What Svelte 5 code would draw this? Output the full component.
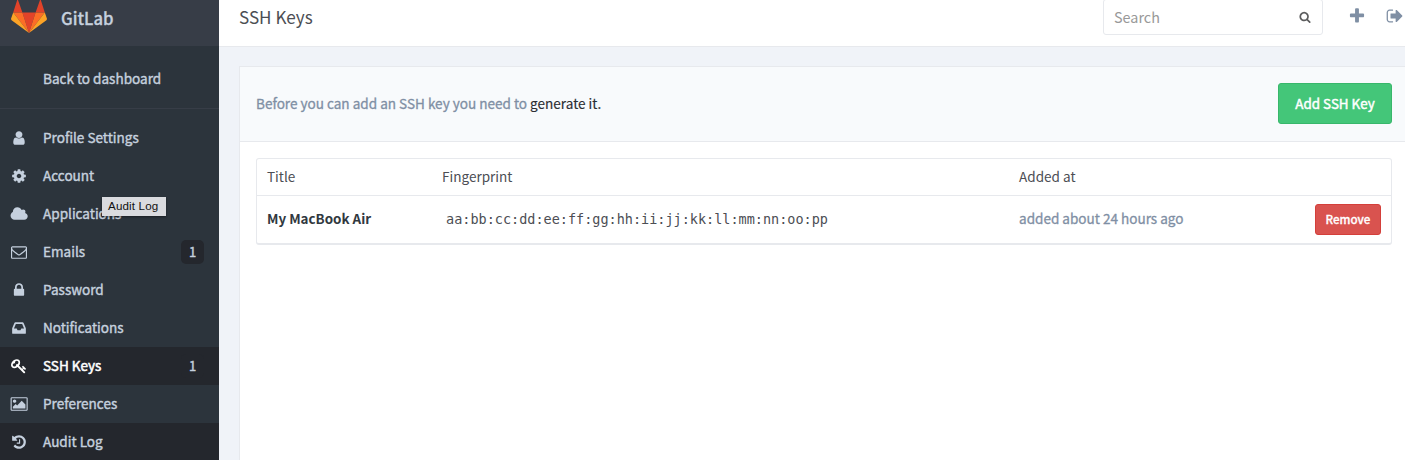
<script>
  const paths = {
    user: 'M1536 1399q0 109-62.5 187t-150.5 78h-854q-88 0-150.5-78t-62.5-187q0-85 8.5-160.5t31.5-152 58.5-131 94-89 134.5-34.5q131 128 313 128t313-128q76 0 134.5 34.5t94 89 58.5 131 31.5 152 8.5 160.5zm-256-887q0 159-112.5 271.5t-271.5 112.5-271.5-112.5-112.5-271.5 112.5-271.5 271.5-112.5 271.5 112.5 112.5 271.5z',
    cog: 'M1152 896q0-106-75-181t-181-75-181 75-75 181 75 181 181 75 181-75 75-181zm512-109v222q0 12-8 23t-20 13l-185 28q-19 54-39 91 35 50 107 138 10 12 10 25t-9 23q-27 37-99 108t-94 71q-12 0-26-9l-138-108q-44 23-91 38-16 136-29 186-7 28-36 28h-222q-14 0-24.5-8.5t-11.5-21.5l-28-184q-49-16-90-37l-141 107q-10 9-25 9-14 0-25-11-126-114-165-168-7-10-7-23 0-12 8-23 15-21 51-66.5t54-70.5q-27-50-41-99l-183-27q-13-2-21-12.5t-8-23.5v-222q0-12 8-23t19-13l186-28q14-46 39-92-40-57-107-138-10-12-10-24 0-10 9-23 26-36 98.5-107.5t94.5-71.5q13 0 26 10l138 107q44-23 91-38 16-136 29-186 7-28 36-28h222q14 0 24.5 8.5t11.5 21.5l28 184q49 16 90 37l142-107q9-9 24-9 13 0 25 10 129 119 165 170 7 8 7 22 0 12-8 23-15 21-51 66.5t-54 70.5q26 50 41 98l183 28q13 2 21 12.5t8 23.5z',
    cloud: 'M1984 1152q0 159-112.5 271.5t-271.5 112.5h-1088q-185 0-316.5-131.5t-131.5-316.5q0-132 71-241.5t187-163.5q-2-28-2-43 0-212 150-362t362-150q158 0 286.5 88t187.5 230q70-62 166-62 106 0 181 75t75 181q0 75-41 138 129 30 213 134.5t84 239.5z',
    envelope: 'M1664 1504v-768q-32 36-69 66-268 206-426 338-51 43-83 67t-86.5 48.5-102.5 24.5h-2q-48 0-102.5-24.5t-86.5-48.5-83-67q-158-132-426-338-37-30-69-66v768q0 13 9.5 22.5t22.5 9.5h1472q13 0 22.5-9.5t9.5-22.5zm0-1051v-24.5l-.5-13-3-12.5-5.5-9-9-7.5-14-2.5h-1472q-13 0-22.5 9.5t-9.5 22.5q0 168 147 284 193 152 401 317 6 5 35 29.5t46 37.5 44.5 31.5 50.5 27.5 43 9h2q20 0 43-9t50.5-27.5 44.5-31.5 46-37.5 35-29.5q208-165 401-317 54-43 100.5-115.5t46.5-131.5zm128-37v1088q0 66-47 113t-113 47h-1472q-66 0-113-47t-47-113v-1088q0-66 47-113t113-47h1472q66 0 113 47t47 113z',
    lock: 'M640 768h512v-192q0-106-75-181t-181-75-181 75-75 181v192zm832 96v576q0 40-28 68t-68 28h-960q-40 0-68-28t-28-68v-576q0-40 28-68t68-28h32v-192q0-184 132-316t316-132 316 132 132 316v192h32q40 0 68 28t28 68z',
    inbox: 'M1151 960h316q-1-3-2.5-8.5t-2.5-7.5l-212-496h-708l-212 496q-1 3-2.5 8.5t-2.5 7.5h316l95 192h320zm513 30v482q0 26-19 45t-45 19h-1408q-26 0-45-19t-19-45v-482q0-62 25-123l238-552q10-25 36.5-42t52.5-17h832q26 0 52.5 17t36.5 42l238 552q25 61 25 123z',
    key: 'M832 512q0-80-56-136t-136-56-136 56-56 136q0 42 19 83-41-19-83-19-80 0-136 56t-56 136 56 136 136 56 136-56 56-136q0-42-19-83 41 19 83 19 80 0 136-56t56-136zm851 704q0 17-49 66t-66 49q-9 0-28.5-16t-36.5-33-38.5-40-24.5-26l-96 96 220 220q28 28 28 68 0 42-39 81t-81 39q-40 0-68-28l-671-671q-176 131-365 131-163 0-265.5-102.5t-102.5-265.5q0-160 95-313t248-248 313-95q163 0 265.5 102.5t102.5 265.5q0 189-131 365l355 355 96-96q-3-3-26-24.5t-40-38.5-33-36.5-16-28.5q0-17 49-66t66-49q13 0 23 10 6 6 46 44.5t82 79.5 86.5 86 73 78 28.5 41z',
    picture: 'M704 576q0 80-56 136t-136 56-136-56-56-136 56-136 136-56 136 56 56 136zm1024 384v448h-1408v-192l320-320 160 160 512-512zm96-704h-1600q-13 0-22.5 9.5t-9.5 22.5v1216q0 13 9.5 22.5t22.5 9.5h1600q13 0 22.5-9.5t9.5-22.5v-1216q0-13-9.5-22.5t-22.5-9.5zm160 32v1216q0 66-47 113t-113 47h-1600q-66 0-113-47t-47-113v-1216q0-66 47-113t113-47h1600q66 0 113 47t47 113z',
    history: 'M1664 896q0 156-61 298t-164 245-245 164-298 61q-172 0-327-72.5t-264-204.5q-7-10-6.5-22.5t8.5-20.5l137-138q10-9 25-9 16 2 23 12 73 95 179 147t225 52q104 0 198.5-40.5t163.5-109.5 109.5-163.5 40.5-198.5-40.5-198.5-109.5-163.5-163.5-109.5-198.5-40.5q-98 0-188 35.5t-160 101.5l137 138q31 30 14 69-17 40-59 40h-448q-26 0-45-19t-19-45v-448q0-42 40-59 39-17 69 14l130 129q107-101 244.5-156.5t284.5-55.5q156 0 298 61t245 164 164 245 61 298zm-640-288v448q0 14-9 23t-23 9h-320q-14 0-23-9t-9-23v-64q0-14 9-23t23-9h224v-352q0-14 9-23t23-9h64q14 0 23 9t9 23z',
    search: 'M1216 832q0-185-131.5-316.5t-316.5-131.5-316.5 131.5-131.5 316.5 131.5 316.5 316.5 131.5 316.5-131.5 131.5-316.5zm512 832q0 52-38 90t-90 38q-54 0-90-38l-343-342q-179 124-399 124-143 0-273.5-55.5t-225-150-150-225-55.5-273.5 55.5-273.5 150-225 225-150 273.5-55.5 273.5 55.5 225 150 150 225 55.5 273.5q0 220-124 399l343 343q37 37 37 90z',
    plus: 'M1600 736v192q0 40-28 68t-68 28h-416v416q0 40-28 68t-68 28h-192q-40 0-68-28t-28-68v-416h-416q-40 0-68-28t-28-68v-192q0-40 28-68t68-28h416v-416q0-40 28-68t68-28h192q40 0 68 28t28 68v416h416q40 0 68 28t28 68z',
    signout: 'M704 1440q0 4 1 20t.5 26.5-3 23.5-10 19.5-20.5 6.5h-320q-119 0-203.5-84.5t-84.5-203.5v-704q0-119 84.5-203.5t203.5-84.5h320q13 0 22.5 9.5t9.5 22.5q0 4 1 20t.5 26.5-3 23.5-10 19.5-20.5 6.5h-320q-66 0-113 47t-47 113v704q0 66 47 113t113 47h312l11.5 1 11.5 3 8 5.5 7 9 2 13.5zm928-544q0 26-19 45l-544 544q-19 19-45 19t-45-19-19-45v-288h-448q-26 0-45-19t-19-45v-384q0-26 19-45t45-19h448v-288q0-26 19-45t45-19 45 19l544 544q19 19 19 45z'
  };

  const items = [
    { icon: 'user', label: 'Profile Settings' },
    { icon: 'cog', label: 'Account' },
    { icon: 'cloud', label: 'Applications', wide: true },
    { icon: 'envelope', label: 'Emails', count: 1 },
    { icon: 'lock', label: 'Password' },
    { icon: 'inbox', label: 'Notifications' },
    { icon: 'key', label: 'SSH Keys', count: 1, active: true },
    { icon: 'picture', label: 'Preferences', wide: true },
    { icon: 'history', label: 'Audit Log', hover: true }
  ];
</script>

{#snippet icon(name, size, wide = false)}
  <svg class="icon" height={size} width={wide ? (size * 2048) / 1792 : size} viewBox={wide ? '0 0 2048 1792' : '0 0 1792 1792'}>
    <path d={paths[name]} />
  </svg>
{/snippet}

<div class="page">
  <aside>
    <div class="brand">
      <svg class="logo" width="36" height="34" viewBox="0 0 36 34">
        <path fill="#e24329" d="M18 33 11.4 12.5h13.2zM2.2 12.5h9.2L7 0q-.4-1-.8 0zM33.8 12.5h-9.2L29 0q.4-1 .8 0z" />
        <path fill="#fc6d26" d="M18 33 11.4 12.5H2.2zM18 33l6.6-20.5h9.2z" />
        <path fill="#fca326" d="M18 33 2.2 12.5.1 18.6q-.3 1 .5 1.6zM18 33l15.8-20.5 2.1 6.1q.3 1-.5 1.6z" />
      </svg>
      <span class="name">GitLab</span>
    </div>
    <a class="back" href="#dashboard">Back to dashboard</a>
    <nav>
      {#each items as item}
        <a class="item" class:active={item.active} class:hover={item.hover} href="#settings">
          <span class="glyph">{@render icon(item.icon, 16, item.wide)}</span>
          <span class="label">{item.label}</span>
          {#if item.count}<span class="count">{item.count}</span>{/if}
        </a>
      {/each}
    </nav>
    <div class="tooltip">Audit Log</div>
  </aside>

  <main>
    <header>
      <h1>SSH Keys</h1>
      <div class="search"><span>Search</span>{@render icon('search', 12)}</div>
      <div class="action plus">{@render icon('plus', 18)}</div>
      <div class="action">{@render icon('signout', 18)}</div>
    </header>
    <section>
      <div class="intro">
        <p>Before you can add an SSH key you need to <a href="#help">generate it.</a></p>
        <button class="add">Add SSH Key</button>
      </div>
      <div class="table">
        <div class="row head">
          <span>Title</span><span>Fingerprint</span><span>Added at</span><span></span>
        </div>
        <div class="row">
          <strong>My MacBook Air</strong>
          <code>aa:bb:cc:dd:ee:ff:gg:hh:ii:jj:kk:ll:mm:nn:oo:pp</code>
          <span class="when">added about 24 hours ago</span>
          <button class="remove">Remove</button>
        </div>
      </div>
    </section>
  </main>
</div>

<style>
  :global(body) { margin: 0; overflow: hidden; }
  .page {
    display: flex;
    width: 1405px;
    height: 460px;
    overflow: hidden;
    background: #f0f3f8;
    font-family: "Noto Sans CJK SC", sans-serif;
    font-size: 13.55px;
    line-height: 20px;
    color: #4c4e54;
  }
  .page :is(a) { text-decoration: none; }
  .icon { display: block; fill: currentColor; flex: none; }
  aside {
    position: relative;
    width: 219px;
    flex: none;
    background: #2c343c;
    color: #c5d0de;
    overflow: hidden;
  }
  .brand {
    display: flex;
    height: 46px;
    box-sizing: border-box;
    padding-left: 11px;
    background: #373d47;
  }
  .logo { flex: none; }
  .name {
    margin-left: 14px;
    font-size: 16.7px;
    font-weight: 500;
    line-height: 36px;
    -webkit-text-stroke: 0.3px currentColor;
  }
  .back {
    display: block;
    height: 62px;
    padding-left: 43px;
    border-bottom: 1px solid #373d47;
    line-height: 65px;
    color: inherit;
    -webkit-text-stroke: 0.4px currentColor;
  }
  nav { padding-top: 10px; }
  .item {
    display: flex;
    align-items: center;
    height: 38px;
    padding-right: 15px;
    color: inherit;
  }
  .glyph { width: 38px; display: flex; justify-content: center; }
  .label { flex: 1; padding: 0 0 2px 5px; -webkit-text-stroke: 0.4px currentColor; }
  .count {
    width: 23px;
    height: 24px;
    border-radius: 5px;
    background: #24272d;
    line-height: 23px;
    text-align: center;
    font-size: 13px;
    -webkit-text-stroke: 0.4px currentColor;
  }
  .active, .hover { background: #24272d; }
  .active .glyph, .active .label { color: #fff; }
  .active .label { -webkit-text-stroke: 0.5px currentColor; }
  .tooltip {
    position: absolute;
    left: 102px;
    top: 197px;
    width: 64px;
    height: 19px;
    box-sizing: border-box;
    padding-left: 6px;
    background: #dadbdf;
    color: #111;
    font: 11.6px/18px "Liberation Sans", sans-serif;
    letter-spacing: 0.15px;
    white-space: nowrap;
    box-shadow: 0 1px 2px rgba(0, 0, 0, 0.4);
  }
  main { flex: 1; min-width: 0; display: flex; flex-direction: column; }
  header {
    display: flex;
    align-items: flex-start;
    height: 46px;
    flex: none;
    border-bottom: 1px solid #e7e9ed;
    background: #fff;
    padding: 0 1px 0 20px;
  }
  h1 { flex: 1; margin: 0; font-size: 17.1px; font-weight: 400; line-height: 34px; color: #4c4e54; }
  .search {
    display: flex;
    align-items: center;
    justify-content: space-between;
    box-sizing: border-box;
    width: 220px;
    height: 36px;
    margin-top: -1px;
    padding: 0 11px 0 10px;
    border: 1px solid #e7e9ed;
    border-radius: 3px;
    color: #999;
    font-size: 14.4px;
  }
  .search .icon { color: #5c5d5e; }
  .action { padding-top: 7px; color: #7f8fa4; margin-left: 20px; }
  .plus { margin-left: 25px; }
  section {
    flex: 1;
    margin: 19px 0 0 20px;
    border: solid #e7e9ed;
    border-width: 1px 0 0 1px;
    background: #fff;
  }
  .intro {
    display: flex;
    align-items: center;
    justify-content: space-between;
    height: 72px;
    padding: 0 13px 2px 16px;
    border-bottom: 1px solid #e7e9ed;
    background: #f8fafc;
    color: #7f8fa4;
  }
  p { margin: 0; -webkit-text-stroke: 0.3px currentColor; }
  p a { color: #2b2e33; -webkit-text-stroke: 0.15px currentColor; }
  button { box-sizing: border-box; padding: 0 0 1px; font-family: inherit; color: #fff; border-radius: 3px; }
  .add {
    width: 114px;
    height: 41px;
    border: 1px solid #38b76b;
    background: #44c679;
    font-size: 13.4px;
    -webkit-text-stroke: 0.45px currentColor;
  }
  .table {
    margin: 16px 13px 0 16px;
    border: 1px solid #e7e9ed;
    border-bottom-width: 2px;
    border-radius: 3px;
  }
  .row {
    display: grid;
    grid-template-columns: 175px 577px 1fr 66px;
    align-items: center;
    height: 46px;
    padding: 0 10px 1px;
  }
  .head { height: 34px; padding-bottom: 2px; border-bottom: 1px solid #e7e9ed; }
  strong { padding-bottom: 2px; font-weight: 700; font-size: 13.4px; color: #313840; }
  code { padding-left: 4px; font: 13.5px/20px "DejaVu Sans Mono", monospace; }
  .when { padding-bottom: 2px; color: #7f8fa4; -webkit-text-stroke: 0.3px currentColor; }
  .remove {
    height: 31px;
    border: 1px solid #d43f3a;
    background: #d9534f;
    font-size: 11.6px;
    font-weight: 500;
    -webkit-text-stroke: 0.3px currentColor;
  }
</style>
